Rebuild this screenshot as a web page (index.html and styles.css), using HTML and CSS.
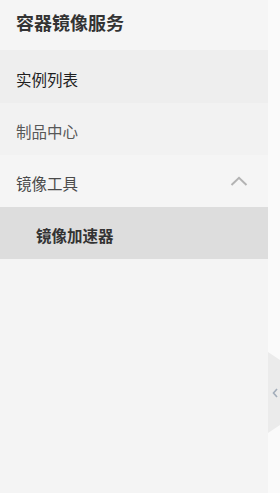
FILE: index.html
```html
<!DOCTYPE html>
<html lang="zh-CN">
<head>
    <meta charset="UTF-8">
    <meta name="viewport" content="width=device-width, initial-scale=1.0">
    <title>容器镜像服务</title>
    <link rel="stylesheet" href="styles.css">
</head>
<body>
    <div id="layout">
        <div id="sidebar">
            <div class="side-title">容器镜像服务</div>
            <div class="nav-item active">实例列表</div>
            <div class="nav-item muted">制品中心</div>
            <div class="nav-item group">
                <span>镜像工具</span>
                <svg class="chevron" width="18" height="10" viewBox="0 0 18 10">
                    <path d="M1.5,9 L9,1.8 L16.5,9" fill="none" stroke="#b3b3b3" stroke-width="2"/>
                </svg>
            </div>
            <div class="nav-sub selected">镜像加速器</div>
            <div id="collapse-handle">
                <svg width="6" height="10" viewBox="0 0 6 10">
                    <path d="M5,1 L1.5,5 L5,9" fill="none" stroke="#a3adba" stroke-width="1.6"/>
                </svg>
            </div>
        </div>
        <div id="main"></div>
    </div>
</body>
</html>
```

FILE: styles.css
```css
body {
    margin: 0;
    font-family: "Noto Sans CJK SC", "Noto Sans", sans-serif;
    background: #fafafa;
}

#layout {
    display: flex;
    min-height: 100vh;
}

#sidebar {
    width: 268px;
    flex-shrink: 0;
    background: #f4f4f4;
    position: relative;
}

#main {
    flex: 1;
}

.side-title {
    height: 50px;
    padding: 0 16px;
    display: flex;
    align-items: center;
    padding-bottom: 6px;
    box-sizing: border-box;
    font-size: 18px;
    font-weight: bold;
    color: #333;
    background: #f5f5f5;
}

.nav-item,
.nav-sub {
    height: 52px;
    display: flex;
    align-items: center;
    justify-content: space-between;
    padding: 4px 20px 0 16px;
    box-sizing: border-box;
    font-size: 15.5px;
    color: #444;
}

.nav-item.active {
    background: #eeeeee;
    color: #1f1f1f;
    height: 53px;
}

.nav-item.muted {
    background: #f2f2f2;
    color: #585858;
}

.nav-item.group {
    background: #f5f5f5;
    color: #4a4a4a;
}

.chevron {
    margin-right: 0;
    margin-top: -4px;
}

.nav-sub {
    padding-left: 36px;
    font-weight: bold;
    color: #333;
}

.nav-sub.selected {
    background: #dddddd;
}

#collapse-handle {
    position: absolute;
    left: 100%;
    top: 352px;
    width: 12px;
    height: 81px;
    background: #ebebeb;
    clip-path: polygon(0 0, 100% 8px, 100% calc(100% - 8px), 0 100%);
    display: flex;
    align-items: center;
    justify-content: flex-end;
    padding-right: 2px;
    box-sizing: border-box;
}
```
